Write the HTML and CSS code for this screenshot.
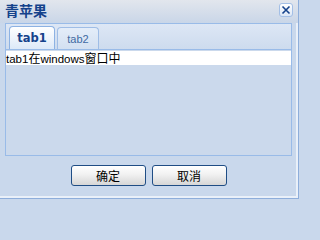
FILE: index.html
```html
<!DOCTYPE html>
<html>
<head>
<meta charset="utf-8">
<link rel="stylesheet" href="styles.css">
</head>
<body>
<div class="win">
  <div class="titlebar">
    <span class="title">青苹果</span>
    <span class="close">
      <svg width="10" height="10" viewBox="0 0 10 10"><path d="M1.5 1.5 L8.5 8.5 M8.5 1.5 L1.5 8.5" stroke="#15428b" stroke-width="1.6" fill="none"/></svg>
    </span>
  </div>
  <div class="panel">
    <div class="strip">
      <div class="tab active">tab1</div>
      <div class="tab">tab2</div>
    </div>
    <div class="content">tab1<span class="cjk">在</span>windows<span class="cjk">窗口中</span></div>
  </div>
  <div class="buttons">
    <div class="btn">确定</div>
    <div class="btn">取消</div>
  </div>
</div>
</body>
</html>
```
FILE: styles.css
```css
html, body { margin: 0; padding: 0; }
body { width: 300px; height: 200px; overflow: hidden; background: #c9d8ec; }
.win {
  width: 299px; height: 199px; box-sizing: border-box;
  border-right: 1px solid #8eaedb; border-bottom: 1px solid #8eaedb;
  box-shadow: inset -2px -2px 0 #e9f0f9;
  background: #c9d8ec;
  display: flex; flex-direction: column;
}
.titlebar {
  height: 23px; flex: none;
  background: linear-gradient(#e2e6ed, #c9d6e8);
  display: flex; align-items: center; justify-content: space-between;
  padding: 0 5px 0 5px;
}
.title {
  font-family: "Noto Sans CJK SC", sans-serif; font-weight: bold; font-size: 14px;
  color: #15428b; margin-top: -3px;
}
.close {
  width: 14px; height: 14px; box-sizing: border-box;
  border: 1px solid #a3bfe6; border-radius: 3px;
  background: linear-gradient(#ffffff, #dce7f6);
  display: flex; align-items: center; justify-content: center;
  margin-top: -4px;
}
.close svg { display: block; }
.panel {
  margin: 0 6px 0 5px; height: 133px; box-sizing: border-box;
  border: 1px solid #99bbe8; flex: none;
  background: #cbd9ec;
}
.strip {
  height: 26px; box-sizing: border-box;
  background: linear-gradient(#dde7f5, #cddbee);
  border-bottom: 1px solid #99bbe8;
  padding: 3px 0 0 3px;
  display: flex; align-items: flex-end; gap: 2px;
}
.tab {
  height: 22px; box-sizing: border-box; width: 42px;
  border: 1px solid #9fbde6; border-bottom: none;
  border-radius: 4px 4px 0 0;
  background: linear-gradient(#e4edf9, #d3e0f1);
  font-family: "Liberation Sans", sans-serif; font-size: 11px; color: #416aa3;
  text-align: center; line-height: 22px;
}
.tab.active {
  width: 46px; height: 23px;
  background: linear-gradient(#ffffff, #dde9f8);
  font-family: "DejaVu Sans", sans-serif; font-weight: bold; font-size: 11.5px; color: #15428b;
  border-color: #8db2e3;
}
.content {
  background: #ffffff; height: 14px; line-height: 14px;
  font-family: "Liberation Sans", sans-serif; font-size: 11.5px; color: #000;
  margin-top: 1px;
}
.cjk { font-family: "Noto Sans CJK SC", sans-serif; font-size: 12px; }
.buttons {
  display: flex; justify-content: center; gap: 6px;
  margin-top: 9px; padding-right: 1px;
}
.btn {
  width: 75px; height: 21px; box-sizing: border-box;
  border: 1px solid #1f4d85; border-radius: 3px;
  background: linear-gradient(#ffffff 0%, #f1f1f1 45%, #d6d6d6 100%);
  font-family: "Noto Sans CJK SC", sans-serif; font-size: 12px; color: #000;
  text-align: center; line-height: 19px;
}
```
